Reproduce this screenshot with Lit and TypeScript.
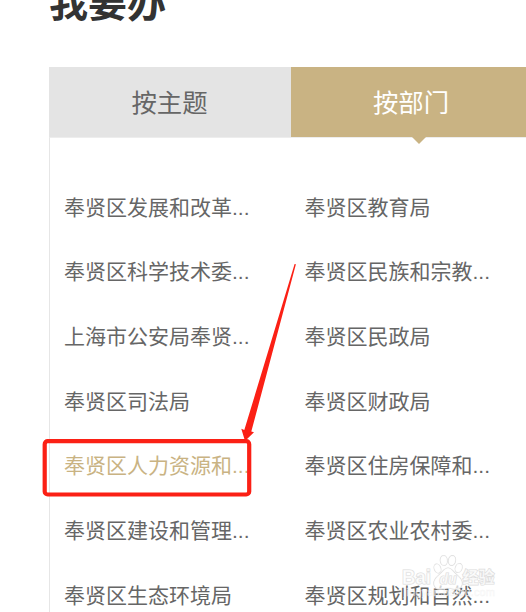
import { LitElement, css, html, svg } from 'lit'

const DEPARTMENTS = [
  '奉贤区发展和改革...',
  '奉贤区教育局',
  '奉贤区科学技术委...',
  '奉贤区民族和宗教...',
  '上海市公安局奉贤...',
  '奉贤区民政局',
  '奉贤区司法局',
  '奉贤区财政局',
  '奉贤区人力资源和...',
  '奉贤区住房保障和...',
  '奉贤区建设和管理...',
  '奉贤区农业农村委...',
  '奉贤区生态环境局',
  '奉贤区规划和自然...',
]

export class DepartmentList extends LitElement {
  static properties = {
    items: { type: Array },
    current: { type: String },
  }

  declare items: string[]
  declare current: string

  constructor() {
    super()
    this.items = []
    this.current = ''
  }

  static styles = css`
    :host {
      display: block;
      border-left: 1px solid #e6e6e6;
      border-top: 1px solid #ededed;
    }
    .grid {
      display: grid;
      grid-template-columns: 240.5px 1fr;
      grid-auto-rows: 64.65px;
      align-items: center;
      padding: 37.4px 0 0 14px;
    }
    .item {
      color: #666;
      font-family: 'Liberation Sans', 'Noto Sans CJK SC', sans-serif;
      font-size: 21px;
      line-height: 30px;
      white-space: nowrap;
    }
    .current {
      color: #c9b383;
    }
  `

  render() {
    return html`
      <div class="grid">
        ${this.items.map(
          (name) => html`<div class="item ${name === this.current ? 'current' : ''}">${name}</div>`,
        )}
      </div>
    `
  }
}

customElements.define('department-list', DepartmentList)

export class BaiduMark extends LitElement {
  static styles = css`
    :host {
      display: block;
    }
    svg {
      display: block;
    }
    .outline {
      fill: #fff;
      fill-opacity: 0.7;
      stroke: #dcdcdc;
      stroke-width: 1.2;
      paint-order: stroke;
    }
    .latin {
      font: bold 20px 'Liberation Sans', sans-serif;
    }
    .small {
      font: italic bold 14px 'Liberation Sans', sans-serif;
    }
    .han {
      font: bold 16px 'Noto Sans CJK SC', sans-serif;
    }
    .site {
      fill: #fff;
      fill-opacity: 0.5;
      stroke: #eee;
      stroke-width: 0.5;
      stroke-opacity: 0.6;
      font: 11px 'Liberation Sans', sans-serif;
    }
  `

  render() {
    return html`
      <svg width="100" height="50" viewBox="0 0 100 50">
        <text class="outline latin" x="2" y="33.5" textLength="29" lengthAdjust="spacingAndGlyphs">Bai</text>
        ${[
          [37.5, 18.5, 3.2, 4.6, -20],
          [43.8, 10.5, 3.5, 4.9, -5],
          [52, 10.5, 3.5, 4.9, 10],
          [58.7, 18, 3.3, 4.6, 20],
        ].map(
          ([x, y, rx, ry, turn]) => svg`
            <ellipse class="outline" cx=${x} cy=${y} rx=${rx} ry=${ry} transform="rotate(${turn} ${x} ${y})" />
          `,
        )}
        <path
          class="outline"
          d="M48 18C44 18 43 22 39 25C34 29 32 34 36 38C40 41 44 38 48 38C52 38 56 41 60 38C64 34 62 29 57 25C53 22 52 18 48 18Z"
        />
        <text class="outline small" x="39.5" y="34">du</text>
        <text class="outline han" x="62.5" y="33">经验</text>
        <text class="site" x="4" y="46" textLength="91">jingyan.baidu.com</text>
      </svg>
    `
  }
}

customElements.define('baidu-mark', BaiduMark)

export class AppRoot extends LitElement {
  static styles = css`
    :host {
      display: block;
      position: relative;
      width: 526px;
      height: 612px;
      overflow: hidden;
      background: #fff;
      font-family: 'Open Sans', 'Noto Sans CJK SC', sans-serif;
    }
    .page {
      margin-left: 49px;
    }
    .title {
      margin: -23px 0 40px;
      height: 50px;
      color: #333;
      font-size: 39px;
      font-weight: 700;
      line-height: 50px;
    }
    .tabs {
      display: grid;
      grid-template-columns: 242px 256px;
      height: 70px;
    }
    .tab {
      position: relative;
      background: #e4e4e4;
      color: #666;
      font-size: 25.4px;
      line-height: 70px;
      text-align: center;
    }
    .label {
      margin-right: 1px;
    }
    .active {
      background: #c9b383;
      color: #fff;
    }
    .active .label {
      margin-right: 16px;
    }
    .active::after {
      content: '';
      position: absolute;
      top: 100%;
      left: 121px;
      border: 7px solid transparent;
      border-top-color: #c9b383;
      border-bottom: 0;
    }
    .marks {
      position: absolute;
      inset: 0;
    }
    .watermark {
      position: absolute;
      left: 400px;
      top: 550px;
    }
  `

  render() {
    return html`
      <div class="page">
        <h1 class="title">我要办</h1>
        <div class="tabs">
          <div class="tab"><div class="label">按主题</div></div>
          <div class="tab active"><div class="label">按部门</div></div>
        </div>
        <department-list .items=${DEPARTMENTS} current="奉贤区人力资源和..."></department-list>
      </div>
      <baidu-mark class="watermark"></baidu-mark>
      <svg class="marks" width="526" height="612" viewBox="0 0 526 612">
        <rect x="44.7" y="441.2" width="204.5" height="53.3" rx="3" fill="none" stroke="#fb2015" stroke-width="4.2" />
        <path d="M294.6 264L295.9 264.3L251.3 431.5L254 432.3L245 441L241.3 428.8L244.3 430Z" fill="#fb2015" />
      </svg>
    `
  }
}

customElements.define('app-root', AppRoot)
